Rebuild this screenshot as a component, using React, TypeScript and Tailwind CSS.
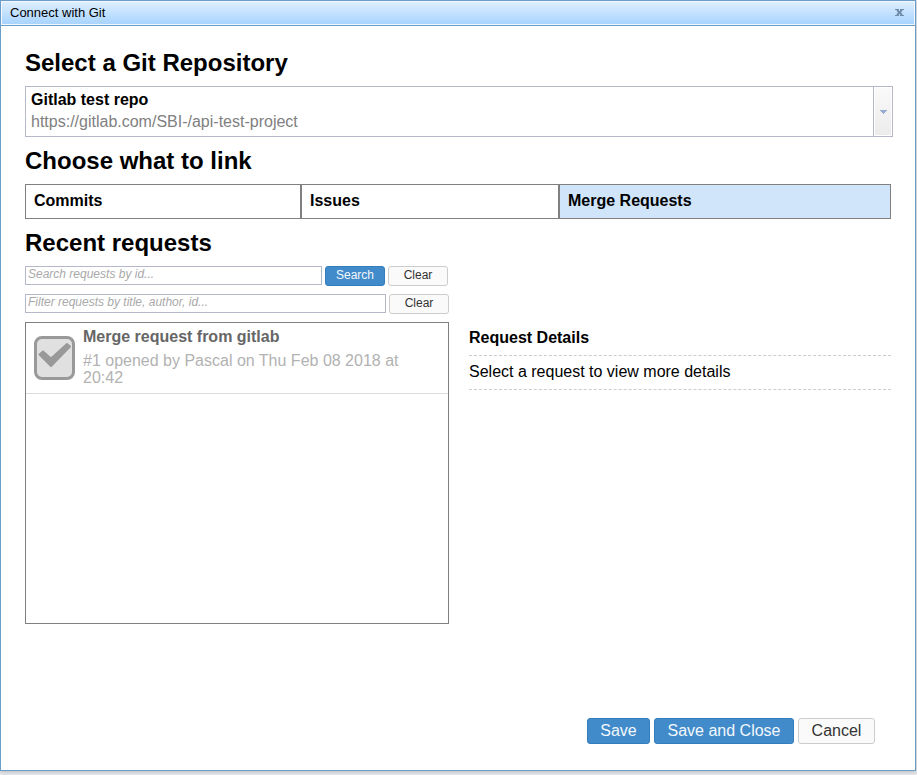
import React, { useState } from "react";

const heading = "text-2xl leading-[47px] font-bold text-black";
const field =
  "h-[19px] min-w-0 flex-1 border border-[#b5b8c8] bg-white px-0.5 pb-1 text-xs italic text-black placeholder:text-[#a9a9a9] outline-none";
const primary = "rounded-[3px] border border-[#357ebd] bg-[#428bca] text-[#f2f8fc]";
const plain = "rounded-[3px] border border-[#cccccc] bg-[#fafafa] text-[#333333]";
const small = "h-5 w-[60px] shrink-0 pb-0.5 text-xs leading-4";
const large = "h-[26px] text-base leading-6";

const tabs = ["Commits", "Issues", "Merge Requests"];

export default function App() {
  const [active, setActive] = useState("Merge Requests");

  return (
    <div className="flex min-h-screen flex-col bg-[#e6e8ec] pr-px pb-1 font-['Liberation_Sans',Arial,sans-serif]">
      <div
        role="dialog"
        aria-labelledby="title"
        className="flex flex-1 flex-col border border-[#6c9dc6] bg-white shadow-[0_1px_4px_rgba(0,0,0,0.2)]"
      >
        <header className="flex h-[25px] items-center justify-between border-b border-[#6c9dc6] bg-gradient-to-b from-[#e0efff] to-[#a5d3ff] pr-[11px] pl-[9px] shadow-[inset_0_0_0_1px_#f0f7ff]">
          <h1 id="title" className="text-[13px] leading-6 text-black">
            Connect with Git
          </h1>
          <button type="button" aria-label="Close">
            <svg width="9" height="8" viewBox="0 0 9 8" fill="none" stroke="#6f8ca8">
              <path d="M2 1L7 6M7 1L2 6" strokeWidth="2" />
              <path d="M0 .5H4M5 .5H9M0 6.5H4M5 6.5H9" />
            </svg>
          </button>
        </header>

        <main className="flex-1 px-6 pt-[13px]">
          <h2 className={heading}>Select a Git Repository</h2>
          <div className="relative -mr-0.5 flex h-[51px] border border-[#b5b8c8]">
            <div className="flex-1 px-[5px] pt-0.5 text-base leading-[22px]">
              <div className="font-bold text-black">Gitlab test repo</div>
              <div className="text-[#808080]">https://gitlab.com/SBI-/api-test-project</div>
            </div>
            <div className="flex w-[19px] items-center justify-center border-l border-[#b5b8c8] bg-gradient-to-b from-[#fafafa] to-[#ebebeb] shadow-[inset_0_0_0_1px_#ffffff]">
              <svg width="7" height="4" viewBox="0 0 7 4" fill="#96aad2" shapeRendering="crispEdges">
                <path d="M0 0H7V1H6V2H5V3H4V4H3V3H2V2H1V1H0Z" />
              </svg>
            </div>
            <select aria-label="Git repository" className="absolute inset-0 w-full opacity-0">
              <option>Gitlab test repo</option>
            </select>
          </div>

          <h2 className={heading}>Choose what to link</h2>
          <div role="tablist" className="grid grid-cols-[276fr_258fr_332fr]">
            {tabs.map((tab) => (
              <button
                key={tab}
                type="button"
                role="tab"
                aria-selected={active === tab}
                onClick={() => setActive(tab)}
                className={`h-[35px] border border-[#808080] px-2 pb-0.5 text-left text-base font-bold text-black ${
                  active === tab ? "bg-[#d0e5f9]" : "bg-white"
                }`}
              >
                {tab}
              </button>
            ))}
          </div>

          <h2 className={heading}>Recent requests</h2>
          <div className="grid grid-cols-[424fr_422fr] gap-x-5 gap-y-2">
            <div className="col-start-1 flex flex-col gap-2">
              <div className="flex items-start gap-[3px] pr-px">
                <input aria-label="Search requests by id" placeholder="Search requests by id..." className={field} />
                <button type="button" className={`${primary} ${small}`}>
                  Search
                </button>
                <button type="button" className={`${plain} ${small}`}>
                  Clear
                </button>
              </div>
              <div className="flex items-start gap-[3px]">
                <input
                  aria-label="Filter requests by title, author, id"
                  placeholder="Filter requests by title, author, id..."
                  className={field}
                />
                <button type="button" className={`${plain} ${small}`}>
                  Clear
                </button>
              </div>
            </div>

            <ul className="col-start-1 h-[302px] overflow-auto border border-[#808080]">
              <li className="border-b border-[#dddddd]">
                <label className="flex gap-2 px-2 pt-1 pb-[7px]">
                  <span className="relative mt-[9px] h-11 w-[41px] shrink-0">
                    <input
                      type="checkbox"
                      defaultChecked
                      className="peer block h-full w-full appearance-none rounded-[8px] border-3 border-[#999999] bg-[#e0e0e0]"
                    />
                    <svg
                      className="pointer-events-none absolute inset-0 hidden peer-checked:block"
                      viewBox="0 0 41 44"
                      fill="#999999"
                    >
                      <path
                        d="M5.5 18.5L9 15.5L17 22.5L33 8L36 10.5L17 30Z"
                        stroke="#999999"
                        strokeWidth="2"
                        strokeLinejoin="round"
                      />
                    </svg>
                  </span>
                  <span className="text-base">
                    <span className="block leading-5 font-bold text-[#666666]">Merge request from gitlab</span>
                    <span className="mt-[5px] block leading-[17px] text-[#b2b2b2]">
                      #1 opened by Pascal on Thu Feb 08 2018 at 20:42
                    </span>
                  </span>
                </label>
              </li>
            </ul>

            <section className="text-base text-black">
              <h3 className="border-b border-dashed border-[#cccccc] pt-1 pb-[5px] leading-6 font-bold">
                Request Details
              </h3>
              <p className="border-b border-dashed border-[#cccccc] pt-1 pb-[5px] leading-6">
                Select a request to view more details
              </p>
            </section>
          </div>
        </main>

        <footer className="flex justify-end gap-1 pr-10 pb-[26px]">
          <button type="button" className={`${primary} ${large} w-[63px]`}>
            Save
          </button>
          <button type="button" className={`${primary} ${large} w-[140px]`}>
            Save and Close
          </button>
          <button type="button" className={`${plain} ${large} w-[77px]`}>
            Cancel
          </button>
        </footer>
      </div>
    </div>
  );
}
